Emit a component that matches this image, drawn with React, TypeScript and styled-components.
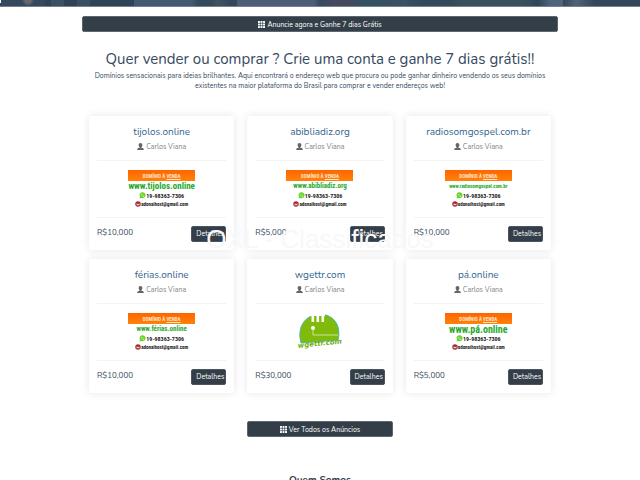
import React from "react";
import styled, { createGlobalStyle } from "styled-components";

const GlobalStyle = createGlobalStyle`
  *, *::before, *::after { box-sizing: border-box; }
  html { scrollbar-width: none; }
  body {
    margin: 0;
    background: #fff;
    color: #34495e;
    font-family: Nunito, Lato, "Open Sans", sans-serif;
    font-size: 8px;
  }
  h1, h2, h3, p { margin: 0; font-weight: 400; }
`;

const Hero = styled.header`
  height: 7px;
  border-bottom: 1px solid #718093;
  background:
    linear-gradient(#fff, #fff) 0 0 / 1px 3px no-repeat,
    radial-gradient(circle at 28px 0, #66696d 0 3px, transparent 6px),
    linear-gradient(90deg,
      #34495e 0 7%, #2f4256 7% 8%, #3b5062 8% 10%, #2f4256 10% 12%, #3a5061 12% 14%,
      #2e4358 14% 21%, #445a72 21% 30%, #33495c 31% 33%, #43525f 34%, #35485b 36% 37%,
      #4c5e77 37% 49%, #364a5e 50%, #46485d 52% 55%, #35505f 56% 60%, #3c5161 63%,
      #33495b 66% 70%, #39505d 72% 82%, #304657 84%, #4f637b 86% 88%, #35475a 88%,
      #506473 90%, #34465a 93% 100%);
`;

const Main = styled.main`
  max-width: 476px;
  margin: 0 auto;
  padding-top: 9px;
`;

const ActionButton = styled.button<{ $narrow?: boolean }>`
  display: flex;
  align-items: center;
  justify-content: center;
  gap: 2px;
  width: ${({ $narrow }) => ($narrow ? "146px" : "100%")};
  height: 16px;
  margin: 0 auto;
  padding: 0;
  border: 1px solid #5d6770;
  border-radius: 2px;
  background: #343e48;
  color: #fff;
  font: inherit;
  font-size: 7px;
  cursor: pointer;
`;

const Intro = styled.section`
  padding: 16px 8px 25px;
  text-align: center;
`;

const Headline = styled.h1`
  font-size: 15px;
  line-height: 22px;
`;

const Lead = styled.p`
  margin-top: 1px;
  font-size: 7px;
  line-height: 10px;
`;

const Listings = styled.section`
  position: relative;
  display: grid;
  grid-template-columns: repeat(3, 1fr);
  gap: 9px 13px;
  padding: 0 7px;
`;

const Card = styled.article`
  height: 134px;
  padding: 10px 8px 8px;
  border-radius: 2px;
  background: #fff;
  box-shadow: 0 0 9px rgba(0, 0, 0, 0.1);
  text-align: center;
`;

const Domain = styled.h2`
  font-size: 10px;
  line-height: 13px;
`;

const DomainLink = styled.a`
  color: #33658f;
  text-decoration: none;
`;

const Seller = styled.p`
  display: flex;
  align-items: center;
  justify-content: center;
  gap: 2px;
  height: 15px;
  color: #808080;
  font-size: 7px;
`;

const Picture = styled.div`
  display: flex;
  align-items: center;
  justify-content: center;
  height: 58px;
  margin-top: 6px;
  border: solid #f3f3f3;
  border-width: 1px 0;
`;

const Banner = styled.div`
  width: 67px;
  height: 39px;
  font-family: "Roboto Condensed", Roboto, sans-serif;
  font-weight: 700;
  white-space: nowrap;
`;

const BannerTop = styled.div`
  height: 11px;
  background: linear-gradient(#ff6500, #ff8208);
  color: #ffe3cc;
  font-size: 5px;
  line-height: 13px;
`;

const BannerName = styled.div<{ $size: number }>`
  display: flex;
  justify-content: center;
  height: 10px;
  color: #27a92a;
  font-size: ${({ $size }) => $size}px;
  line-height: 11px;
`;

const BannerLine = styled.div<{ $size: number }>`
  display: flex;
  align-items: center;
  justify-content: center;
  height: 9px;
  color: #222;
  font-size: ${({ $size }) => $size}px;
`;

const Footer = styled.div`
  display: flex;
  align-items: flex-start;
  justify-content: space-between;
  padding-top: 8px;
`;

const Price = styled.span`
  font-size: 8px;
  line-height: 14px;
`;

const Details = styled.button`
  width: 35px;
  height: 16px;
  padding: 0 0 0 3px;
  border: 1px solid #4b555f;
  border-radius: 2px;
  background: #343e48;
  color: #fff;
  font: inherit;
  font-size: 7px;
  line-height: 12px;
  cursor: pointer;
`;

const Watermark = styled.div`
  position: absolute;
  top: 108px;
  left: 0;
  right: 0;
  color: #f8f8f8;
  font-family: "Liberation Sans", Arial, sans-serif;
  font-size: 26px;
  line-height: 30px;
  text-align: center;
  white-space: nowrap;
  pointer-events: none;
`;

const More = styled.div`
  padding: 28px 0 36px;
`;

const About = styled.h3`
  font-size: 10px;
  font-weight: 700;
  line-height: 14px;
  text-align: center;
  color: #343e48;
`;

const GridIcon = () => (
  <svg width="7" height="7" viewBox="0 0 11 11" fill="#fff" aria-hidden="true">
    {[0, 4, 8].map((y) => [0, 4, 8].map((x) => <rect key={`${x}-${y}`} x={x} y={y} width="3" height="3" />))}
  </svg>
);

const UserIcon = () => (
  <svg width="7" height="7" viewBox="1 0 14 15" fill="#666" aria-hidden="true">
    <path d="M8 0C5.500 0 4 1.800 4 4.200c0 2 .8 3.900 2.100 4.900v1.300C3.500 11 1 11.700 1 13.500V15h14v-1.500c0-1.800-2.500-2.500-5.100-3.100V9.100C11.200 8.100 12 6.200 12 4.200 12 1.800 10.500 0 8 0z" />
  </svg>
);

const PhoneIcon = () => (
  <svg width="7" height="7" viewBox="0 0 14 14" aria-hidden="true">
    <path d="M1 13l1-3.500A6 6 0 1 1 5 12z" fill="#6bd22e" />
    <path d="M4.500 4c0 3 2.500 5.500 5.500 5.500l.5-1.500-2-.8-1 .8L6 6.500l.7-1L6 4z" fill="#d8f7c5" />
  </svg>
);

const MailIcon = () => (
  <svg width="6" height="6" viewBox="0 0 12 12" aria-hidden="true">
    <circle cx="6" cy="6" r="5.500" fill="#a32b35" />
    <path d="M3 4h6v4.500H3zM3 4l3 2.500L9 4" fill="#fff" stroke="#a32b35" strokeWidth=".7" />
  </svg>
);

const HelmetLogo = () => (
  <svg width="48" height="38" viewBox="0 0 48 38" role="img" aria-label="wgettr.com">
    <path d="M5 30C1 15 8 5 18 2h12c10 3 15 13 12 25z" fill="#80bb0b" stroke="#45b9a0" strokeWidth="1" />
    <path d="M15 0h14v3H15z" fill="#fff" />
    <path d="M15.500 0h2.600v9h-2.600zM20.500 0h2.600v9h-2.600zM25.500 0h2.600v9h-2.600z" fill="#fff" />
    <circle cx="17" cy="15" r="2" fill="#fff" />
    <path d="M17 15v7h25" fill="none" stroke="#dff0b8" strokeWidth=".8" />
    <text x="2" y="35" transform="rotate(-6 2 35)" fill="#74ad12" fontFamily="DejaVu Sans, sans-serif" fontWeight="700" fontStyle="italic" fontSize="7">
      wgettr.com
    </text>
  </svg>
);

const SaleBanner = ({ name, size }: { name: string; size: number }) => (
  <Banner>
    <BannerTop>
      DOMÍNIO À <u>VENDA</u>
    </BannerTop>
    <BannerName $size={size}>www.{name}</BannerName>
    <BannerLine $size={6}>
      <PhoneIcon />
      19-98363-7306
    </BannerLine>
    <BannerLine $size={5}>
      <MailIcon />
      adonaihost@gmail.com
    </BannerLine>
  </Banner>
);

const items = [
  { name: "tijolos.online", price: "R$10,000", size: 9 },
  { name: "abibliadiz.org", price: "R$5,000", size: 7 },
  { name: "radiosomgospel.com.br", price: "R$10,000", size: 5 },
  { name: "férias.online", price: "R$10,000", size: 7 },
  { name: "wgettr.com", price: "R$30,000", size: 0 },
  { name: "pá.online", price: "R$5,000", size: 10 },
];

export default function App() {
  return (
    <>
      <GlobalStyle />
      <Hero />
      <Main>
        <ActionButton>
          <GridIcon />
          Anuncie agora e Ganhe 7 dias Grátis
        </ActionButton>
        <Intro>
          <Headline>Quer vender ou comprar ? Crie uma conta e ganhe 7 dias grátis!!</Headline>
          <Lead>
            Domínios sensacionais para ideias brilhantes. Aqui encontrará o endereço web que procura ou pode ganhar
            dinheiro vendendo os seus domínios existentes na maior plataforma do Brasil para comprar e vender endereços
            web!
          </Lead>
        </Intro>
        <Listings>
          {items.map((item) => (
            <Card key={item.name}>
              <Domain>
                <DomainLink href="#">{item.name}</DomainLink>
              </Domain>
              <Seller>
                <UserIcon />
                Carlos Viana
              </Seller>
              <Picture>{item.size ? <SaleBanner name={item.name} size={item.size} /> : <HelmetLogo />}</Picture>
              <Footer>
                <Price>{item.price}</Price>
                <Details>Detalhes</Details>
              </Footer>
            </Card>
          ))}
          <Watermark>OXL - Classificados</Watermark>
        </Listings>
        <More>
          <ActionButton $narrow>
            <GridIcon />
            Ver Todos os Anúncios
          </ActionButton>
        </More>
        <About>Quem Somos</About>
      </Main>
    </>
  );
}
